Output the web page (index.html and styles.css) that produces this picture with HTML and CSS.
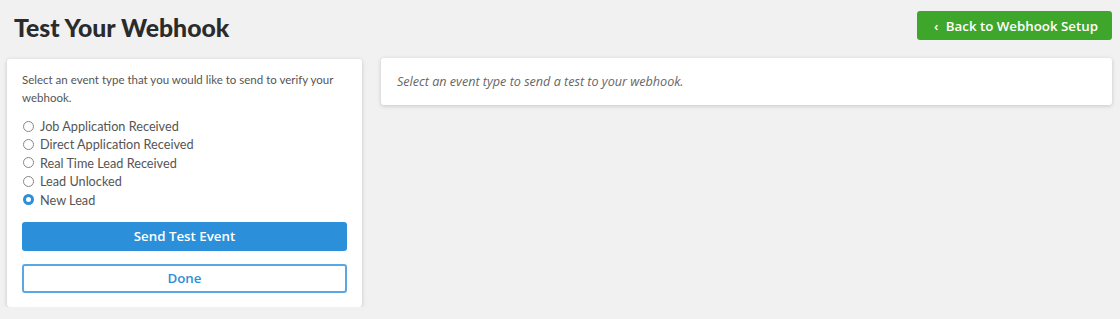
FILE: index.html
```html
<!DOCTYPE html>
<html lang="en">
<head>
    <meta charset="UTF-8">
    <meta name="viewport" content="width=device-width, initial-scale=1.0">
    <title>Test Your Webhook</title>
    <link rel="stylesheet" href="styles.css">
</head>
<body>
    <div class="page">
        <div class="header">
            <h1>Test Your Webhook</h1>
            <button class="back-button"><span class="chevron">&lsaquo;</span> Back to Webhook Setup</button>
        </div>
        <div class="content">
            <div class="card events-card">
                <p class="intro">Select an event type that you would like to send to verify your webhook.</p>
                <ul class="event-list">
                    <li><label><input type="radio" name="event"> Job Application Received</label></li>
                    <li><label><input type="radio" name="event"> Direct Application Received</label></li>
                    <li><label><input type="radio" name="event"> Real Time Lead Received</label></li>
                    <li><label><input type="radio" name="event"> Lead Unlocked</label></li>
                    <li><label><input type="radio" name="event" checked> New Lead</label></li>
                </ul>
                <button class="send-button">Send Test Event</button>
                <button class="done-button">Done</button>
            </div>
            <div class="card result-card">
                <p class="placeholder">Select an event type to send a test to your webhook.</p>
            </div>
        </div>
    </div>
</body>
</html>
```

FILE: styles.css
```css
body {
    margin: 0;
    background: #f1f1f1;
    font-family: 'Open Sans', sans-serif;
    color: #555;
}

.page {
    padding: 11px 8px 0 7px;
}

.header {
    display: flex;
    justify-content: space-between;
    align-items: flex-start;
    height: 48px;
}

h1 {
    margin: 2px 0 0 7px;
    font-family: 'Lato', sans-serif;
    font-weight: 900;
    font-size: 24.8px;
    color: #2b2b2b;
}

.back-button {
    background: #3fa62c;
    color: #fff;
    border: none;
    border-radius: 3px;
    height: 29px;
    padding: 0 14px 0 17px;
    font-family: 'Open Sans', sans-serif;
    font-weight: 600;
    font-size: 13.3px;
    cursor: pointer;
}

.chevron {
    font-size: 13px;
    margin-right: 4px;
}

.content {
    display: flex;
    align-items: flex-start;
    gap: 19px;
}

.card {
    background: #fff;
    border-radius: 3px;
    box-shadow: 0 1px 4px rgba(0, 0, 0, 0.18);
}

.events-card {
    width: 325px;
    padding: 12px 15px 14px;
}

.intro {
    margin: 0 0 11px;
    font-family: 'Lato', sans-serif;
    font-size: 11.5px;
    line-height: 18px;
    color: #555;
}

.event-list {
    list-style: none;
    margin: 0 0 12px;
    padding: 0;
}

.event-list li {
    height: 18.4px;
    font-family: 'Lato', sans-serif;
    font-size: 12.7px;
    color: #555;
}

.event-list label {
    display: flex;
    align-items: center;
    gap: 6px;
}

.event-list input {
    appearance: none;
    width: 11px;
    height: 11px;
    margin: 0 0 0 1px;
    border: 1px solid #888;
    border-radius: 50%;
    background: #fff;
}

.event-list input:checked {
    border: 3px solid #2b90d9;
}

.send-button, .done-button {
    display: block;
    width: 100%;
    height: 29px;
    border-radius: 3px;
    font-family: 'Open Sans', sans-serif;
    font-weight: 600;
    font-size: 13.3px;
    cursor: pointer;
}

.send-button {
    background: #2b90d9;
    color: #fff;
    border: none;
}

.done-button {
    margin-top: 13px;
    background: #fff;
    color: #2b90d9;
    border: 2px solid #5aa8e2;
}

.result-card {
    flex: 1;
    height: 47px;
    margin-top: -1px;
    padding: 0 16px;
    display: flex;
    align-items: center;
}

.placeholder {
    margin: 0;
    font-style: italic;
    font-size: 12.6px;
    color: #666;
}
```
